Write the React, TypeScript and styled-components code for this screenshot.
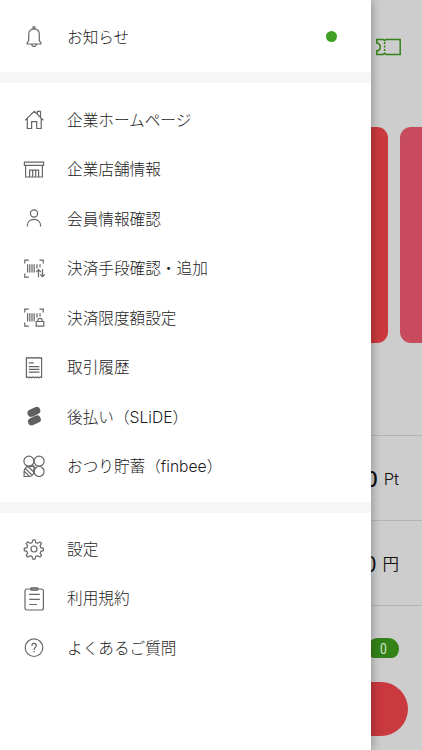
import React from "react";
import styled, { createGlobalStyle } from "styled-components";

const Global = createGlobalStyle`
  * { box-sizing: border-box; }
  body { margin: 0; background: #cdcdcd; overflow: hidden; }
`;

const Screen = styled.div`
  position: relative;
  width: 422px;
  height: 750px;
  overflow: hidden;
  background: #cdcdcd;
  color: #101010;
  font-family: "Noto Sans CJK JP", sans-serif;
`;

const Page = styled.main`
  display: flex;
  flex-direction: column;
  height: 750px;
`;

const Header = styled.header`
  display: flex;
  justify-content: flex-end;
  height: 127px;
  padding: 38px 21.5px 0 0;
`;

const Cards = styled.div`
  display: flex;
  gap: 12px;
  height: 216px;
  margin-bottom: 92px;
`;

const Card = styled.div<{ $color: string; $first?: boolean }>`
  flex: none;
  width: 360px;
  margin-left: ${(p) => (p.$first ? "28px" : "0")};
  border-radius: 11px;
  background: ${(p) => p.$color};
`;

const Balance = styled.div`
  display: flex;
  align-items: baseline;
  justify-content: flex-end;
  gap: 6px;
  height: 85px;
  padding: 21px 23px 0 0;
  border-top: 1px solid #b4b4b8;
  line-height: 36px;
`;

const Amount = styled.span<{ $bold?: boolean }>`
  font-size: 22px;
  font-weight: ${(p) => (p.$bold ? 500 : 400)};
  transform: translateY(2px);
`;

const Unit = styled.span`
  font-family: Inter, "Noto Sans CJK JP", sans-serif;
  font-size: 16.5px;
  font-weight: 350;
`;

const Actions = styled.div`
  display: flex;
  flex-direction: column;
  align-items: flex-end;
  gap: 24px;
  padding-top: 32px;
  border-top: 1px solid #b4b4b8;
`;

const Count = styled.span`
  display: flex;
  justify-content: center;
  width: 32px;
  height: 20px;
  margin-right: 23px;
  border-radius: 11px 11px 7px 7px / 11px 11px 9px 9px;
  background: #338318;
  color: #d7e3d2;
  font-family: Roboto, sans-serif;
  font-size: 15.5px;
  line-height: 22px;
`;

const CountDigits = styled.span`
  transform: scaleX(0.78);
`;

const PayButton = styled.button`
  width: 380px;
  height: 54px;
  margin-right: 14px;
  border: 0;
  border-radius: 27px;
  background: #c9393e;
`;

const Drawer = styled.aside`
  position: absolute;
  inset: 0 auto 0 0;
  width: 371px;
  background: #fff;
  box-shadow: 0 0 10px rgba(0, 0, 0, 0.36);
`;

const Section = styled.nav<{ $height: number; $top: number }>`
  height: ${(p) => p.$height}px;
  padding-top: ${(p) => p.$top}px;
`;

const Divider = styled.div`
  height: 11px;
  background: #f6f6f6;
`;

const Row = styled.div`
  display: flex;
  align-items: center;
  height: 49.5px;
  padding: 0 34px 0 20px;
`;

const IconBox = styled.span`
  display: flex;
  justify-content: center;
  width: 28px;
  margin-right: 19px;
`;

const Label = styled.span`
  flex: 1;
  padding-top: 1.6px;
  color: #1c1c1c;
  font-family: Inter, "Noto Sans CJK JP", sans-serif;
  font-size: 15.65px;
  font-weight: 300;
  line-height: 24px;
  white-space: nowrap;
`;

const UnreadDot = styled.span`
  width: 11px;
  height: 11px;
  border-radius: 50%;
  background: #3fa023;
`;

const Glyph = styled.svg`
  display: block;
  width: 28px;
  height: 28px;
  overflow: visible;
  fill: none;
  stroke: #666;
  stroke-width: 1.2;
`;

const Scanner = () => (
  <>
    <path d="M4.8 8.5V5.2h4M19.5 5.2h3.7v3.3M4.8 18.5v3.7h4" />
    <path d="M7.6 9.3v8.2M9.8 9.3v8.2M12 9.3v8.2M14.2 9.3v8.2M17 9.3v4.2M20 9.3v3.2" />
  </>
);

const icons: Record<string, React.ReactNode> = {
  bell: (
    <>
      <circle cx="14" cy="4.8" r="1.1" />
      <path d="M8.7 17.6v-6.2c0-3.4 2.1-5.6 5.3-5.6s5.3 2.2 5.3 5.6v6.2l1.6 2.4v1H7.1v-1zM11.7 21.2c.2 1.6 1.1 2.3 2.3 2.3s2.1-.7 2.3-2.3" />
    </>
  ),
  home: (
    <path d="M5.1 14.4 14.3 5.3l9.2 9.1M7.3 12.5v10h4.3v-6.8h5.1v6.8h4.5v-10M17.3 8V5.3h3.2v5.8" />
  ),
  store: (
    <path d="M4.4 6.1h19.2v3.3H4.4zM5.6 9.4V21h16.8V9.4M9.6 21v-6.8h9V21M12.7 14.2V21M15.7 14.2V21" />
  ),
  person: (
    <>
      <circle cx="14" cy="8.5" r="3.6" />
      <path d="M7.3 21.4c0-4.5 2.9-7 6.700-7s6.700 2.500 6.700 7" />
    </>
  ),
  transfer: (
    <>
      <Scanner />
      <path d="M18.5 22.2v-7.4M16.1 17.2l2.4-2.5 2.4 2.5M22.5 14.3v7.2M20.3 19.3l2.2 2.4 2.3-2.4" />
    </>
  ),
  limit: (
    <>
      <Scanner />
      <path fill="#fff" d="M16.2 17.5h7.6v4.6h-7.6zM17.9 17.5v-1.3c0-1 .8-1.9 2.1-1.9s2.1.9 2.1 1.9v1.3" />
    </>
  ),
  receipt: (
    <>
      <path d="M6.4 3.4v20.4M21.6 3.4v20.4" />
      <path d="m6.4 3.4 1.3.8 1.2-.8 1.3.8 1.3-.8 1.2.8 1.3-.8 1.3.8 1.2-.8 1.3.8 1.3-.8 1.2.8 1.3-.8M6.4 23.8l1.3-.8 1.2.8 1.3-.8 1.3.8 1.2-.8 1.3.8 1.3-.8 1.2.8 1.3-.8 1.3.8 1.2-.8 1.3.8" />
      <path d="M8.8 8.9h5M8.8 12.6h10.6M8.8 15.4h10.6M8.8 18.2h10.6" />
    </>
  ),
  slide: (
    <path stroke="#606060" strokeWidth="7.4" strokeLinecap="round" d="m11.2 10.1 5.4-2.5M11.7 18.7l5.4-2.5" />
  ),
  bee: (
    <>
      <circle cx="8.9" cy="8.2" r="5" />
      <circle cx="19.1" cy="8.2" r="5" />
      <circle cx="19.1" cy="18.5" r="5" />
      <path d="M13.9 13.4v5.300a5 5 0 0 1-5.100 4.800H4.100v-4.800a5 5 0 0 1 4.800-5.300zM5.200 15.400l7.100 7M8.100 13.500l5.600 5.500M4.200 18.100l5.200 5.300M12 11.700l4 4" />
    </>
  ),
  gear: (
    <>
      <circle cx="14" cy="14" r="3" />
      <path strokeLinejoin="round" d="M13 4.9h2l.7 2.7 1.8.7 2.4-1.4 1.6 1.6-1.4 2.4.7 1.8 2.6.7v2.3l-2.6.6-.7 1.8 1.4 2.4-1.6 1.6-2.4-1.4-1.8.7-.7 2.7h-2.3l-.7-2.7-1.8-.7-2.4 1.4-1.6-1.6 1.4-2.4-.7-1.8-2.6-.6v-2.3l2.6-.7.7-1.8-1.4-2.4 1.6-1.6 2.4 1.4 1.8-.7z" />
    </>
  ),
  clipboard: (
    <>
      <rect x="5" y="4" width="18.4" height="21" rx="2" />
      <rect x="10.7" y="2.8" width="7.3" height="2.4" rx=".7" fill="#999" />
      <path d="M9.2 9.4h10.6M9.2 14.4h10.6M9.2 19.5h7.7" />
    </>
  ),
  help: (
    <>
      <circle cx="14" cy="13.7" r="8.8" />
      <path d="M11.9 11.7c0-1.5.9-2.3 2.2-2.3s2.2.8 2.2 2.1c0 1.8-2.2 1.9-2.2 4v.4M14.1 17v1.3" />
    </>
  ),
};

type Item = { icon: string; label: string; unread?: boolean };

const notices: Item[] = [{ icon: "bell", label: "お知らせ", unread: true }];
const services: Item[] = [
  { icon: "home", label: "企業ホームページ" },
  { icon: "store", label: "企業店舗情報" },
  { icon: "person", label: "会員情報確認" },
  { icon: "transfer", label: "決済手段確認・追加" },
  { icon: "limit", label: "決済限度額設定" },
  { icon: "receipt", label: "取引履歴" },
  { icon: "slide", label: "後払い（SLiDE）" },
  { icon: "bee", label: "おつり貯蓄（finbee）" },
];
const support: Item[] = [
  { icon: "gear", label: "設定" },
  { icon: "clipboard", label: "利用規約" },
  { icon: "help", label: "よくあるご質問" },
];

const Menu = ({ items, height, top }: { items: Item[]; height: number; top: number }) => (
  <Section $height={height} $top={top}>
    {items.map((item) => (
      <Row key={item.label}>
        <IconBox>
          <Glyph viewBox="0 0 28 28">{icons[item.icon]}</Glyph>
        </IconBox>
        <Label>{item.label}</Label>
        {item.unread && <UnreadDot />}
      </Row>
    ))}
  </Section>
);

export default function App() {
  return (
    <>
      <Global />
      <Screen>
        <Page>
          <Header>
            <svg width="25" height="18" viewBox="0 0 25 18" fill="none" stroke="#338318" strokeWidth="1.5">
              <path d="M.8 1.4h6.4l1.4 1.1L10 1.4h14.2v15H10l-1.4-1.1-1.4 1.1H.8v-3.6c2 0 3.4-1.6 3.4-3.8S2.8 5.1.8 5.1z" />
              <path d="M8.6 4.1v10" strokeDasharray="2 1.4" />
            </svg>
          </Header>
          <Cards>
            <Card $first $color="#ca393d" />
            <Card $color="#c74b5c" />
          </Cards>
          <Balance>
            <Amount $bold>0</Amount>
            <Unit>Pt</Unit>
          </Balance>
          <Balance>
            <Amount>0</Amount>
            <Unit>円</Unit>
          </Balance>
          <Actions>
            <Count>
              <CountDigits>0</CountDigits>
            </Count>
            <PayButton />
          </Actions>
        </Page>
        <Drawer>
          <Menu items={notices} height={72} top={12} />
          <Divider />
          <Menu items={services} height={419} top={12.4} />
          <Divider />
          <Menu items={support} height={237} top={11.3} />
        </Drawer>
      </Screen>
    </>
  );
}
